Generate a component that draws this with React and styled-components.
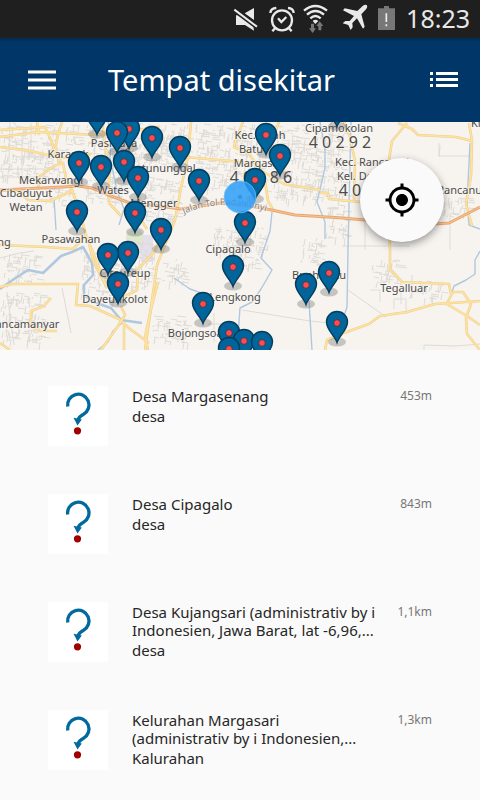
import React from "react";
import styled, { createGlobalStyle } from "styled-components";
import { MdMyLocation } from "react-icons/md";

const GlobalStyle = createGlobalStyle`
  * { box-sizing: border-box; }
  body { margin: 0; background: #fafafa; font-family: "Noto Sans", "Open Sans", sans-serif; }
`;

const Screen = styled.div`
  min-height: 100vh;
  overflow: hidden;
  background: #fafafa;
`;

const StatusBar = styled.header`
  display: flex;
  align-items: center;
  justify-content: flex-end;
  gap: 10px;
  height: 38px;
  padding-right: 10px;
  background: #1f1f1f;
  color: #e9e9e9;
`;

const StatusIcon = styled.svg`
  flex: none;
  width: ${(p) => p.$width}px;
  height: 32px;
  overflow: visible;
`;

const Clock = styled.time`
  align-self: flex-start;
  font-size: 25px;
  line-height: 36px;
`;

const AppBar = styled.nav`
  display: flex;
  align-items: center;
  height: 84px;
  padding: 0 22px 0 28px;
  background: linear-gradient(#002b50, #003668 4px);
  color: #fff;
`;

const BarButton = styled.button`
  display: flex;
  padding: 0;
  border: 0;
  background: none;
  color: inherit;
  cursor: pointer;
`;

const Title = styled.h1`
  flex: 1;
  margin: 0 0 0 52px;
  font-size: 29px;
  font-weight: 400;
  line-height: 40px;
`;

const MapPanel = styled.section`
  position: relative;
  height: 228px;
`;

const MapCanvas = styled.svg`
  display: block;
  width: 100%;
  height: 100%;
`;

const LocateButton = styled.button`
  position: absolute;
  top: 36px;
  right: 36px;
  display: grid;
  place-items: center;
  width: 84px;
  height: 84px;
  padding: 0;
  border: 0;
  border-radius: 50%;
  background: #fafafa;
  color: #000;
  box-shadow: 0 3px 8px rgba(0, 0, 0, 0.4);
  cursor: pointer;
`;

const PlaceList = styled.ul`
  margin: 0;
  padding: 0;
  list-style: none;
`;

const PlaceRow = styled.li`
  display: flex;
  align-items: flex-start;
  height: 108px;
  padding: 36px 48px 0;
`;

const Thumb = styled.svg`
  flex: none;
  width: 60px;
  height: 60px;
  margin-right: 24px;
  background: #fff;
`;

const PlaceText = styled.div`
  flex: 1;
  min-width: 0;
  padding-top: 1px;
  color: #262626;
  font-size: 15px;
`;

const PlaceName = styled.h2`
  margin: 0 0 1px;
  font-size: inherit;
  font-weight: 400;
  line-height: 18px;
  white-space: pre;
`;

const PlaceKind = styled.p`
  margin: 0;
  line-height: 20px;
`;

const Distance = styled.span`
  color: #777;
  font-size: 12px;
  line-height: 20px;
`;

const Label = styled.text`
  font-family: "Noto Sans", sans-serif;
  font-size: ${(p) => p.$size || 11}px;
  fill: ${(p) => p.$color || "#4c4c4c"};
  stroke: #f8f5f0;
  stroke-width: 2px;
  stroke-opacity: 0.6;
  paint-order: stroke;
`;

const pins = [
  [337, 107], [97, 115], [129, 129], [117, 133], [266, 135], [152, 138], [180, 148],
  [280, 156], [124, 162], [79, 163], [101, 167], [138, 178], [255, 180], [199, 181],
  [77, 212], [135, 213], [245, 223], [161, 230], [128, 253], [108, 255], [233, 267],
  [329, 273], [118, 284], [306, 285], [203, 304], [337, 323], [229, 333], [244, 341],
  [262, 343], [229, 349],
];

const labels = [
  [114, 147, "Pasirjaya"], [68, 158, "Karasak"], [162, 172, "Batununggal"],
  [51, 184, "Mekarwangi"], [113, 194, "Wates"], [26, 197, "Cibaduyut"], [26, 211, "Wetan"],
  [154, 207, "Mengger"], [71, 243, "Pasawahan"], [4, 246, "ng"], [125, 277, "Citeureup"],
  [115, 303, "Dayeuhkolot"], [24, 328, "Rancamanyar"], [260, 139, "Kec. Buah"],
  [251, 153, "Batu"], [260, 167, "Margasari"], [339, 132, "Cipamokolan"],
  [372, 166, "Kec. Rancasari"], [368, 180, "Kel. Derwati"], [478, 194, "Rancanumpang"],
  [484, 127, "Kidul"], [228, 253, "Cipagalo"], [235, 301, "Lengkong"],
  [202, 337, "Bojongsoang"], [319, 279, "Buah Batu"], [404, 292, "Tegalluar"],
];

const postcodes = [[261, 183, "4 0 2 8 6"], [340, 148, "4 0 2 9 2"], [370, 196, "4 0 2 9 4"]];

const roads = [
  "M0 137 L37 132 L98 135 L160 127",
  "M0 147 L30 151 L62 158 L92 154",
  "M37 122 L39 135",
  "M0 130 L45 127 L50 138 L57 157 L63 164 L66 178 L72 190 L81 216 L86 235",
  "M62 122 C55 142 54 150 59 161",
  "M38 188 L40 176 L54 166 L63 163",
  "M0 191 L17 190 L28 200 L50 201 L74 190",
  "M102 122 L109 171 L109 203 L121 216",
  "M137 122 L127 160 L139 191 L139 217 L147 229",
  "M191 122 L188 156 L181 188 L175 220 L157 265 L145 350",
  "M184 157 L231 161 L253 164",
  "M243 122 L236 139 L234 147 L248 153 L262 171 L284 184 L320 190",
  "M279 122 L271 142 L282 169",
  "M265 181 L268 201 L274 211",
  "M344 122 L350 137 L355 161 L354 201",
  "M320 193 L328 193 L329 199 L360 202",
  "M407 123 L392 141 L388 166 L390 250 L390 269 L402 282 L449 284 L451 294",
  "M398 123 L412 129 L418 135 L456 137 L472 141 L471 176 L466 204 L472 226",
  "M469 123 L472 141",
  "M0 245 L46 247 L73 249 L86 235 L107 288",
  "M87 236 L94 263 L107 288",
  "M0 287 L12 284 L78 284 L76 305 L90 306 L119 319 L130 329 L149 343",
  "M51 298 L44 306 L31 311 L31 326 L39 331 L57 331",
  "M0 343 L10 350",
  "M160 237 L155 251 L138 269 L137 290 L120 299",
  "M101 350 L116 329 L125 315 L121 306",
  "M124 322 L124 350",
  "M158 282 L151 309 L145 337 L148 350",
  "M325 350 L327 340 L341 334 L369 324 L380 316 L407 312 L435 304 L451 303 L480 301",
  "M445 303 L467 316 L480 325",
  "M447 303 L453 292 L463 292 L471 304 L466 318 L467 334 L480 350",
];

const highway = "M0 190 L62 187 L78 186 L92 188 L111 196 L130 203 L151 205 L181 209 L220 203 L262 208 L295 215 L343 218 L420 225 L449 223 L480 207";
const tollPath = "M184 214 Q225 195 280 216";

const rivers = [
  "M0 289 L14 279 L28 270 L43 273 L61 256 L72 252 L83 247 L92 263 L93 275 L84 285 L84 295 L96 303 L111 308 L121 320 L142 323",
  "M123 322 L113 331 L108 342 L98 350",
  "M108 122 L112 135 L110 158 L117 191 L124 209 L119 225",
  "M320 122 L325 150 L325 168 L317 202 L325 222 L325 239",
  "M272 212 L270 231 L261 258 L272 270 L261 289 L252 302 L240 308 L237 350",
  "M351 122 L348 249 L347 307 L339 331",
  "M309 301 L312 350",
  "M480 251 L475 260 L475 274 L466 280 L454 286 L451 296",
  "M470 143 L467 203 L469 225 L480 229",
  "M174 278 L190 289 L210 296",
  "M54 198 L56 230",
];

const lanes = [
  "M10 122 L9 162 M22 132 V182 M31 123 V158 M0 169 H58 M0 177 H49",
  "M440 145 L440 147 L439 157 M439 143 V156 H469",
  "M342 246 H410 M348 290 L386 317 M370 290 H380 V302",
  "M242 310 L310 321 M310 321 L330 323",
  "M208 324 H235 M214 313 V342 M163 210 L165 236",
  "M424 350 L424 345 L456 346 L480 344",
  "M394 309 V299 H406 V314 M401 283 V304 M412 275 V298",
  "M365 207 V250 M331 122 V166 M450 213 V250 M356 163 H387",
  "M0 258 L20 253 L34 251 M7 292 L14 345 M62 288 L71 333",
];

const settled = [
  [0, 123, 60, 56], [66, 123, 122, 42], [85, 170, 42, 33], [143, 177, 38, 43],
  [196, 124, 72, 67], [272, 124, 72, 76], [326, 204, 22, 34], [4, 253, 34, 30],
  [2, 293, 42, 49], [82, 248, 32, 55], [120, 239, 36, 48], [153, 315, 36, 28],
  [213, 227, 55, 26], [162, 258, 23, 25], [226, 250, 33, 18], [301, 237, 23, 28],
  [372, 260, 26, 25], [409, 281, 33, 18], [444, 198, 25, 19], [44, 186, 28, 21],
];

function streetGrid() {
  let seed = 17;
  const next = () => {
    seed = (seed * 16807) % 2147483647;
    return seed / 2147483647;
  };
  const segments = [];
  settled.forEach(([x, y, w, h]) => {
    const count = Math.round((w * h) / 17);
    for (let i = 0; i < count; i += 1) {
      const sx = Math.round(x + next() * w);
      const sy = Math.round(y + next() * h);
      const length = Math.round(2 + next() * 7);
      segments.push(next() > 0.5 ? `M${sx} ${sy}l${length} 1` : `M${sx} ${sy}l-1 ${length}`);
    }
  });
  return segments.join("");
}

const streets = streetGrid();

function Pin({ x, y }) {
  return (
    <g transform={`translate(${x} ${y})`}>
      <path d="M0 19.5C-2 13-10.5 7-10.5 -1A10.5 10.5 0 0 1 10.5 -1C10.5 7 2 13 0 19.5Z" fill="#00659a" stroke="#073c5b" strokeWidth="1.4" />
      <circle r="3.4" fill="#ff4b4b" stroke="#333d59" strokeWidth="1" />
    </g>
  );
}

function PlacesMap() {
  return (
    <MapCanvas viewBox="0 122 480 228" preserveAspectRatio="xMidYMid slice" role="img" aria-label="Peta">
      <rect x="0" y="122" width="480" height="228" fill="#f7f4f0" />
      <path d="M138 235 H153 V262 H141Z" fill="#e5dfeb" />
      <circle cx="135" cy="238" r="9" fill="#dfe8cf" />
      <path d={streets} fill="none" stroke="#dfdbd6" strokeWidth="1" />
      {lanes.map((d) => <path key={d} d={d} fill="none" stroke="#dedbd7" />)}
      {rivers.map((d, i) => <path key={d} d={d} fill="none" stroke="#b0c8df" strokeWidth={i === 0 ? 2.6 : 1.4} strokeLinejoin="round" />)}
      {roads.map((d) => <path key={d} d={d} fill="none" stroke="#efcf8c" strokeWidth="2.6" strokeLinejoin="round" />)}
      {roads.map((d) => <path key={d} d={d} fill="none" stroke="#fde2a0" strokeWidth="1.5" strokeLinejoin="round" />)}
      <path d={highway} fill="none" stroke="#e9a674" strokeWidth="3" strokeLinejoin="round" />
      <path d={highway} fill="none" stroke="#f7c58d" strokeWidth="1" />
      <path id="toll" d={tollPath} fill="none" />
      <Label $size={9} $color="#8b8279"><textPath href="#toll">Jalan Tol Padaleunyi</textPath></Label>
      {labels.map(([x, y, name]) => <Label key={name} x={x} y={y} textAnchor="middle">{name}</Label>)}
      {postcodes.map(([x, y, code]) => <Label key={code} $size={16} x={x} y={y} textAnchor="middle">{code}</Label>)}
      {pins.map(([x, y]) => <ellipse key={`${x}-${y}`} cx={x} cy={y + 19} rx="9" ry="4.5" fill="#555" fillOpacity="0.3" />)}
      {pins.map(([x, y]) => <Pin key={`${x}-${y}`} x={x} y={y} />)}
      <circle cx="240" cy="197" r="16" fill="#2b9df8" fillOpacity="0.85" stroke="#7cc3fa" strokeOpacity="0.7" />
      <circle cx="240" cy="197" r="1.5" fill="none" stroke="#2688d8" />
    </MapCanvas>
  );
}

function StatusIcons() {
  return (
    <>
      <StatusIcon $width={25} viewBox="42 9 75 96" fill="currentColor" aria-label="Senyap">
        <path d="M48 46 L58 46 L100 78 L102 92 L75 75 H48Z M74 40 L102 24 V60Z" />
        <path d="M43 29 L111 80" stroke="#1f1f1f" strokeWidth="15" />
        <path d="M43 29 L111 80" stroke="currentColor" strokeWidth="6" />
      </StatusIcon>
      <StatusIcon $width={25} viewBox="147 9 75 96" fill="none" stroke="currentColor" strokeWidth="7" aria-label="Alarm">
        <circle cx="186" cy="61" r="30" />
        <path d="M174 55 L184 66 L199 51 M151 39 Q152 25 169 24 M204 24 Q220 25 221 39 M165 85 L157 94 M207 85 L215 94" />
      </StatusIcon>
      <StatusIcon $width={27} viewBox="252 9 81 96" fill="none" stroke="currentColor" strokeWidth="7" aria-label="Wi-Fi">
        <path d="M252 32 Q286 4 321 32 M261 44 Q286 22 312 44 M271 55 Q286 41 302 55" />
        <path d="M278 63 Q286 56 295 63 L286 72Z" fill="currentColor" stroke="none" />
        <path d="M273 71 H282 V85 H288 L278 99 L267 85 H273Z M295 91 H304 V78 H310 L299 64 L289 78 H295Z" fill="#777" stroke="none" />
      </StatusIcon>
      <StatusIcon $width={27} viewBox="363 9 81 96" fill="currentColor" aria-label="Mode pesawat">
        <path d="M440 15 Q444 20 438 28 L424 43 L434 80 L429 86 L411 55 L397 69 L398 82 L392 90 L385 75 L368 70 L376 63 L389 63 L402 48 L369 31 L374 25 L412 33 L428 18 Q435 12 440 15Z" />
      </StatusIcon>
      <StatusIcon $width={18} viewBox="474 9 54 96" aria-label="Baterai">
        <path d="M474 25 H492 V18 H507 V25 H525 V90 H474Z" fill="#777" />
        <path d="M499 40 V66 M499 73 V79" stroke="#eee" strokeWidth="5" />
      </StatusIcon>
    </>
  );
}

function QuestionThumb() {
  return (
    <Thumb viewBox="0 0 60 60" aria-hidden="true">
      <path d="M19.7 20.5 A10.7 10.7 0 1 1 35.5 28.2 Q31 30.5 30 34" fill="none" stroke="#006a9e" strokeWidth="3.3" />
      <path d="M25.5 31.8 L33.8 33.4 L29.5 39.6Z" fill="#006a9e" />
      <circle cx="29.5" cy="44.8" r="3.6" fill="#a00000" />
    </Thumb>
  );
}

const places = [
  { name: "Desa Margasenang", kind: "desa", distance: "453m" },
  { name: "Desa Cipagalo", kind: "desa", distance: "843m" },
  { name: "Desa Kujangsari (administrativ by i\nIndonesien, Jawa Barat, lat -6,96,...", kind: "desa", distance: "1,1km" },
  { name: "Kelurahan Margasari\n(administrativ by i Indonesien,...", kind: "Kalurahan", distance: "1,3km" },
];

export default function App() {
  return (
    <Screen>
      <GlobalStyle />
      <StatusBar>
        <StatusIcons />
        <Clock>18:23</Clock>
      </StatusBar>
      <AppBar>
        <BarButton aria-label="Menu">
          <svg width="28" height="22" viewBox="0 0 28 22" fill="none" stroke="currentColor">
            <path d="M0 3 H28 M0 11 H28 M0 19 H28" strokeWidth="4" strokeOpacity="0.5" />
            <path d="M0 3 H28 M0 11 H28 M0 19 H28" strokeWidth="2" />
          </svg>
        </BarButton>
        <Title>Tempat disekitar</Title>
        <BarButton aria-label="Daftar">
          <svg width="28" height="16" viewBox="0 0 28 16" fill="currentColor">
            <path d="M0 0h3v3H0zM6 0h22v3H6zM0 6h3v3H0zM6 6h22v3H6zM0 12h3v3H0zM6 12h22v3H6z" />
          </svg>
        </BarButton>
      </AppBar>
      <MapPanel>
        <PlacesMap />
        <LocateButton aria-label="Lokasi saya"><MdMyLocation size={36} /></LocateButton>
      </MapPanel>
      <PlaceList>
        {places.map((place) => (
          <PlaceRow key={place.name}>
            <QuestionThumb />
            <PlaceText>
              <PlaceName>{place.name}</PlaceName>
              <PlaceKind>{place.kind}</PlaceKind>
            </PlaceText>
            <Distance>{place.distance}</Distance>
          </PlaceRow>
        ))}
      </PlaceList>
    </Screen>
  );
}
